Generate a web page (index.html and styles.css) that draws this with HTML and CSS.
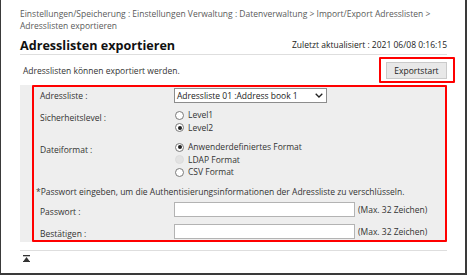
FILE: index.html
```html
<!DOCTYPE html>
<html lang="de">
<head>
  <meta charset="UTF-8">
  <title>Adresslisten exportieren</title>
  <link rel="stylesheet" href="styles.css">
</head>
<body>
  <div class="window">
    <div class="page">
      <div class="breadcrumb">Einstellungen/Speicherung : Einstellungen Verwaltung : Datenverwaltung &gt; Import/Export Adresslisten &gt;<br>Adresslisten exportieren</div>

      <div class="title-row">
        <h1>Adresslisten exportieren</h1>
        <span class="updated">Zuletzt aktualisiert : 2021 06/08 0:16:15</span>
      </div>

      <div class="action-row">
        <p>Adresslisten können exportiert werden.</p>
        <span class="mark"><button class="btn">Exportstart</button></span>
      </div>

      <div class="panel">
        <div class="panel-box">
          <div class="row">
            <span class="label label-mid">Adressliste :</span>
            <div class="select">
              <span>Adressliste 01 :Address book 1</span>
              <svg width="8" height="5" viewBox="0 0 8 5"><path d="M0.7 0.7 L4 4 L7.3 0.7" fill="none" stroke="#222" stroke-width="1.3"/></svg>
            </div>
          </div>

          <div class="row row-options">
            <span class="label label-top">Sicherheitslevel :</span>
            <div class="options">
              <label class="option"><span class="radio"></span>Level1</label>
              <label class="option"><span class="radio checked"></span>Level2</label>
            </div>
          </div>

          <div class="row row-format">
            <span class="label label-top">Dateiformat :</span>
            <div class="options">
              <label class="option"><span class="radio checked"></span>Anwenderdefiniertes Format</label>
              <label class="option disabled"><span class="radio"></span>LDAP Format</label>
              <label class="option"><span class="radio"></span>CSV Format</label>
            </div>
          </div>

          <p class="note">*Passwort eingeben, um die Authentisierungsinformationen der Adressliste zu verschlüsseln.</p>

          <div class="row row-input">
            <span class="label label-input">Passwort :</span>
            <span class="field"></span>
            <span class="hint">(Max. 32 Zeichen)</span>
          </div>

          <div class="row row-input row-confirm">
            <span class="label label-input">Bestätigen :</span>
            <span class="field"></span>
            <span class="hint">(Max. 32 Zeichen)</span>
          </div>
        </div>
      </div>

      <div class="footer">
        <svg class="top-icon" width="7" height="7" viewBox="0 0 7 7">
          <rect x="0" y="0" width="7" height="1.3" fill="#333"/>
          <polygon points="3.5,2 0.6,6 6.4,6" fill="#333"/>
          <rect x="0" y="6" width="7" height="1" fill="#333"/>
        </svg>
      </div>
    </div>
  </div>
</body>
</html>
```

FILE: styles.css
```css
* {
  box-sizing: border-box;
}

body {
  margin: 0;
  background: #fff;
  font-family: "Open Sans", "Noto Sans", sans-serif;
  font-size: 8.5px;
  color: #333;
}

.window {
  width: 467px;
  height: 275px;
  border: solid #3a3a3a;
  border-width: 0 2px 2px 1px;
}

.page {
  padding: 8px 18px 0 19px;
}

.breadcrumb {
  line-height: 12px;
  color: #5a5a5a;
}

.title-row {
  display: flex;
  justify-content: space-between;
  align-items: flex-end;
  height: 17px;
  margin-top: 6px;
  border-bottom: 1px solid #dedede;
}

.title-row h1 {
  margin: 0;
  font-size: 12.6px;
  line-height: 15px;
  font-weight: 700;
  color: #111;
  align-self: flex-start;
}

.updated {
  line-height: 12px;
  margin-bottom: 3px;
  color: #222;
}

.action-row {
  display: flex;
  justify-content: space-between;
  align-items: center;
  height: 30px;
}

.action-row p {
  margin: 0;
  padding-left: 3px;
}

.mark {
  position: relative;
  display: flex;
}

.mark::after {
  content: "";
  position: absolute;
  top: -5px;
  left: -7px;
  right: -8px;
  bottom: -4px;
  border: 2px solid #f00;
  border-radius: 1px;
}

.btn {
  width: 61px;
  height: 17px;
  padding: 0;
  font: inherit;
  color: #222;
  background: #e8e8e8;
  border: 1px solid #cacaca;
  border-radius: 0;
}

.panel {
  background: #eeeeee;
  padding-left: 12px;
}

.panel-box {
  height: 157px;
  border: 2px solid #f00;
  border-radius: 1px;
  padding: 1px 0 0 6px;
}

.row {
  display: flex;
  align-items: flex-start;
}

.label {
  width: 134px;
  flex-shrink: 0;
}

.label-mid {
  line-height: 15px;
}

.label-top {
  line-height: 12.5px;
  padding-top: 2.5px;
}

.label-input {
  line-height: 15px;
  height: 15px;
  padding-top: 2.5px;
}

.select {
  width: 153px;
  height: 15px;
  display: flex;
  justify-content: space-between;
  align-items: center;
  padding: 0 3px 0 2px;
  background: #fff;
  border: 1px solid #8c8c8c;
  color: #222;
}

.row-options {
  margin-top: 6px;
}

.row-format {
  margin-top: 7px;
}

.options {
  display: flex;
  flex-direction: column;
}

.option {
  display: flex;
  align-items: center;
  gap: 4px;
  line-height: 12.5px;
  padding-left: 1px;
}

.radio {
  width: 9px;
  height: 9px;
  border-radius: 50%;
  border: 1px solid #7a7a7a;
  background: #fff;
  display: flex;
  align-items: center;
  justify-content: center;
}

.radio.checked::before {
  content: "";
  width: 4px;
  height: 4px;
  border-radius: 50%;
  background: #222;
}

.option.disabled .radio {
  background: #e2e2e2;
  border-color: #dcdcdc;
}

.note {
  margin: 7px 0 0 -4px;
  line-height: 12px;
}

.row-input {
  margin-top: 4px;
  height: 15px;
}

.row-confirm {
  margin-top: 7px;
}

.field {
  width: 181px;
  height: 15px;
  background: #fff;
  border: 1px solid #b3b3b3;
}

.hint {
  margin-left: 3px;
  line-height: 15px;
}

.footer {
  margin-top: 8px;
  border-top: 1px solid #dedede;
  padding: 4px 0 0 3px;
}

.top-icon {
  display: block;
}
```
